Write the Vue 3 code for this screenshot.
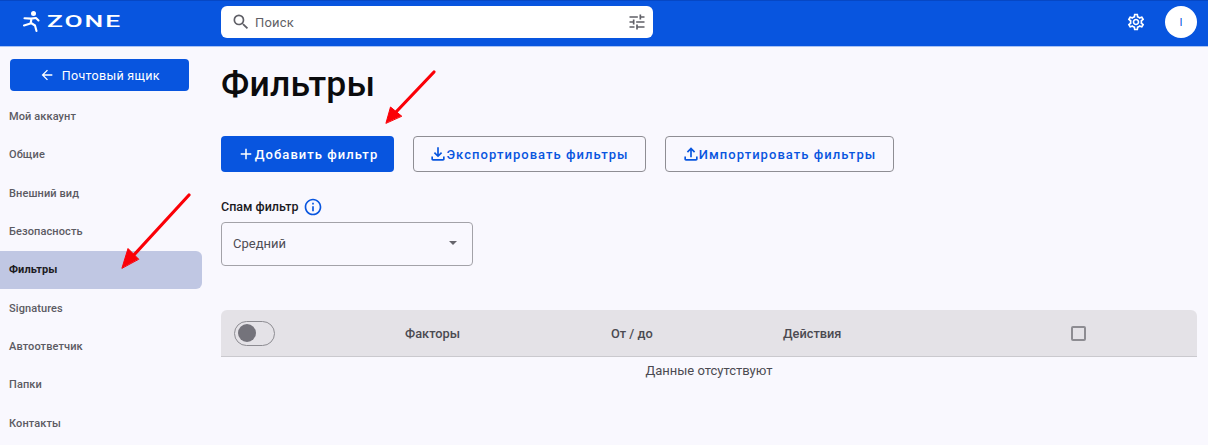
<script setup>
const items = [
  { label: 'Мой аккаунт' },
  { label: 'Общие' },
  { label: 'Внешний вид' },
  { label: 'Безопасность' },
  { label: 'Фильтры', active: true },
  { label: 'Signatures' },
  { label: 'Автоответчик' },
  { label: 'Папки' },
  { label: 'Контакты' },
]
</script>

<template>
  <div class="page">
    <header class="topbar">
      <div class="logo">
        <svg class="logo-man" width="20" height="24" viewBox="0 0 20 24">
          <circle cx="11.500" cy="3.600" r="2.500" fill="#fff" />
          <path d="M2.500 8.200 L9 8.600 L14 8 L16.500 10.500 M9.500 9 L8.500 13.500 L2 15.500 M9 13 L13 15.500 L14.500 21" fill="none" stroke="#fff" stroke-width="2.100" stroke-linecap="round" stroke-linejoin="round" />
        </svg>
        <span class="logo-text">ZONE</span>
      </div>
      <div class="search">
        <svg class="search-icon" width="20" height="20" viewBox="0 0 24 24"><path fill="#5f5f66" d="M15.500 14h-.79l-.28-.27A6.470 6.470 0 0 0 16 9.500 6.500 6.500 0 1 0 9.500 16c1.610 0 3.090-.59 4.230-1.570l.27.28v.79l5 4.990L20.490 19l-4.990-5zm-6 0C7.010 14 5 11.990 5 9.500S7.010 5 9.500 5 14 7.010 14 9.500 11.990 14 9.500 14z" /></svg>
        <span class="search-text">Поиск</span>
        <svg class="tune-icon" width="20" height="20" viewBox="0 0 24 24"><path fill="#5f5f66" d="M3 17v2h6v-2H3zM3 5v2h10V5H3zm10 16v-2h8v-2h-8v-2h-2v6h2zM7 9v2H3v2h4v2h2V9H7zm14 4v-2H11v2h10zm-6-4h2V7h4V5h-4V3h-2v6z" /></svg>
      </div>
      <svg class="gear" width="20" height="20" viewBox="0 0 24 24"><path fill="#fff" d="M19.430 12.980c.04-.32.07-.64.07-.98 0-.34-.03-.66-.07-.98l2.110-1.650c.19-.15.24-.42.12-.64l-2-3.460c-.09-.16-.26-.25-.44-.25-.06 0-.12.01-.17.03l-2.490 1c-.52-.4-1.080-.73-1.690-.98l-.38-2.650C14.460 2.180 14.250 2 14 2h-4c-.25 0-.46.180-.49.420l-.38 2.650c-.61.250-1.170.590-1.690.980l-2.490-1c-.06-.02-.12-.03-.18-.03-.17 0-.34.090-.43.250l-2 3.460c-.13.220-.07.490.12.640l2.110 1.650c-.04.320-.07.650-.07.980 0 .330.030.660.070.980l-2.110 1.650c-.19.150-.24.420-.12.640l2 3.460c.09.160.26.250.44.250.06 0 .12-.01.170-.03l2.490-1c.52.400 1.080.730 1.690.980l.38 2.650c.03.240.24.420.49.420h4c.25 0 .46-.18.490-.42l.38-2.650c.61-.25 1.170-.59 1.690-.98l2.490 1c.06.020.12.030.18.030.17 0 .34-.09.43-.25l2-3.460c.12-.22.070-.49-.12-.64l-2.110-1.650zm-1.980-1.710c.04.310.05.520.05.730 0 .210-.02.430-.05.730l-.14 1.130.89.700 1.080.840-.7 1.210-1.270-.51-1.040-.42-.9.680c-.43.320-.84.560-1.250.730l-1.060.430-.16 1.130-.2 1.350h-1.400l-.19-1.350-.16-1.130-1.060-.43c-.43-.18-.83-.41-1.230-.71l-.91-.7-1.060.43-1.270.51-.7-1.210 1.080-.84.890-.7-.14-1.130c-.03-.31-.05-.54-.05-.74s.02-.43.050-.73l.14-1.130-.89-.7-1.080-.84.7-1.210 1.270.51 1.040.42.900-.68c.43-.32.840-.56 1.250-.73l1.060-.43.160-1.130.2-1.350h1.390l.19 1.350.16 1.130 1.060.43c.43.180.83.410 1.230.71l.91.700 1.060-.43 1.270-.51.7 1.210-1.070.85-.89.7.14 1.130zM12 8c-2.210 0-4 1.790-4 4s1.790 4 4 4 4-1.790 4-4-1.790-4-4-4zm0 6c-1.100 0-2-.9-2-2s.9-2 2-2 2 .9 2 2-.9 2-2 2z" /></svg>
      <div class="avatar">I</div>
    </header>

    <div class="body">
      <aside class="sidebar">
        <button class="mailbox">
          <svg width="16" height="16" viewBox="0 0 24 24"><path fill="#fff" d="M20 11H7.830l5.590-5.590L12 4l-8 8 8 8 1.410-1.410L7.830 13H20v-2z" /></svg>
          <span>Почтовый ящик</span>
        </button>
        <nav class="menu">
          <a v-for="item in items" :key="item.label" class="menu-item" :class="{ active: item.active }">{{ item.label }}</a>
        </nav>
      </aside>

      <main class="content">
        <h1 class="title">Фильтры</h1>

        <div class="actions">
          <button class="btn primary">
            <svg width="18" height="18" viewBox="0 0 24 24"><path fill="#fff" d="M19 13h-6v6h-2v-6H5v-2h6V5h2v6h6v2z" /></svg>
            Добавить фильтр
          </button>
          <button class="btn outline export">
            <svg class="btn-icon" width="20" height="20" viewBox="0 0 24 24"><path fill="#0855df" d="M18 15v3H6v-3H4v3c0 1.100.9 2 2 2h12c1.100 0 2-.9 2-2v-3h-2zm-1-4-1.410-1.410L13 12.170V4h-2v8.170L8.410 9.590 7 11l5 5 5-5z" /></svg>
            Экспортировать фильтры
          </button>
          <button class="btn outline import">
            <svg class="btn-icon" width="20" height="20" viewBox="0 0 24 24"><path fill="#0855df" d="M18 15v3H6v-3H4v3c0 1.100.9 2 2 2h12c1.100 0 2-.9 2-2v-3h-2zM7 9l1.410 1.410L11 7.830V16h2V7.830l2.590 2.580L17 9l-5-5-5 5z" /></svg>
            Импортировать фильтры
          </button>
        </div>

        <div class="spam-label">
          <span>Спам фильтр</span>
          <svg class="info" width="20" height="20" viewBox="0 0 24 24"><path fill="#0855df" d="M11 7h2v2h-2zm0 4h2v6h-2zm1-9C6.480 2 2 6.480 2 12s4.480 10 10 10 10-4.480 10-10S17.520 2 12 2zm0 18c-4.410 0-8-3.590-8-8s3.590-8 8-8 8 3.590 8 8-3.590 8-8 8z" /></svg>
        </div>

        <div class="select">
          <span>Средний</span>
          <i class="caret"></i>
        </div>

        <div class="table-head">
          <div class="toggle"><i class="thumb"></i></div>
          <span class="col col-factors">Факторы</span>
          <span class="col col-range">От / до</span>
          <span class="col col-actions">Действия</span>
          <i class="checkbox"></i>
        </div>
        <div class="empty">Данные отсутствуют</div>
      </main>
    </div>

    <svg class="arrows" width="1208" height="445" viewBox="0 0 1208 445">
      <g fill="#fb0007" stroke="#fb0007" stroke-linecap="round">
        <path d="M434 72 L396 112" stroke-width="3.200" fill="none" />
        <path d="M386 123 L390.500 107 L401.500 116 Z" stroke-width="1" />
        <path d="M189 195 L132 257" stroke-width="3.200" fill="none" />
        <path d="M122 268 L128 248.500 L138.500 259 Z" stroke-width="1" />
      </g>
    </svg>
  </div>
</template>

<style>
html, body { margin: 0; background: #f9f8fe; }
</style>

<style scoped>
.page {
  position: relative;
  width: 1208px;
  height: 445px;
  overflow: hidden;
  background: #f9f8fe;
  font-family: Roboto, "Liberation Sans", sans-serif;
  color: #1c1b1f;
}
.topbar {
  box-sizing: border-box;
  height: 47px;
  display: flex;
  align-items: center;
  background: #0855df;
  border-top: 1px solid #0647c4;
  border-bottom: 1px solid #a9c3f4;
  padding: 0 11px 3px 22px;
}
.logo {
  width: 199px;
  display: flex;
  align-items: center;
  gap: 5px;
  flex: none;
}
.logo-text {
  display: inline-block;
  color: #fff;
  font-family: Roboto, sans-serif;
  font-size: 16.500px;
  font-weight: 500;
  line-height: 16px;
  letter-spacing: 1.200px;
  transform: scaleX(1.6);
  transform-origin: left center;
}
.search {
  box-sizing: border-box;
  width: 432px;
  height: 32px;
  flex: none;
  display: flex;
  align-items: center;
  background: #fff;
  border-radius: 6px;
  padding: 0 6px 0 10px;
}
.search-text {
  margin-left: 4px;
  flex: 1;
  font-size: 13px;
  letter-spacing: .2px;
  color: #5f5f66;
}
.gear { margin-left: auto; margin-right: 19px; }
.avatar {
  width: 32px;
  height: 32px;
  flex: none;
  border-radius: 50%;
  background: #fff;
  color: #0855df;
  display: flex;
  align-items: center;
  justify-content: center;
  font-size: 11px;
}
.body { display: flex; }
.sidebar { width: 202px; flex: none; padding-top: 12px; }
.mailbox {
  box-sizing: border-box;
  width: 179px;
  height: 32px;
  margin-left: 10px;
  display: flex;
  align-items: center;
  justify-content: center;
  gap: 6.500px;
  border: 0;
  border-radius: 4px;
  background: #0855df;
  color: #fff;
  font: 400 12.500px Roboto, sans-serif;
  letter-spacing: .3px;
}
.menu { margin-top: 6.300px; display: flex; flex-direction: column; }
.menu-item {
  box-sizing: border-box;
  height: 38.330px;
  display: flex;
  align-items: center;
  padding-left: 9px;
  font-size: 11px;
  font-weight: 500;
  color: #5c5b63;
  letter-spacing: .1px;
}
.menu-item.active {
  background: #c0c7e3;
  border-radius: 0 6px 6px 0;
  color: #1c1b1f;
  font-weight: 700;
}
.content { margin-left: 19px; width: 976px; }
.title {
  margin: 18px 0 0;
  font-size: 35.500px;
  line-height: 38px;
  font-weight: 500;
  color: #0b0b0d;
  letter-spacing: .2px;
}
.actions { display: flex; margin-top: 33px; }
.btn {
  box-sizing: border-box;
  height: 36px;
  display: flex;
  align-items: center;
  justify-content: center;
  border-radius: 4px;
  font: 500 13px Roboto, sans-serif;
  letter-spacing: 1.050px;
  white-space: nowrap;
  padding: 0;
}
.btn-icon { margin: 0 -2px 0 -2px; }
.primary { width: 173px; background: #0855df; color: #fff; border: 0; }
.outline { background: transparent; color: #0855df; border: 1px solid #8f8e94; }
.export { width: 233px; margin-left: 19px; }
.import { width: 229px; margin-left: 19px; }
.spam-label {
  display: flex;
  align-items: center;
  gap: 5px;
  margin-top: 25px;
  height: 18px;
  font-size: 12.500px;
  font-weight: 500;
  color: #1c1b1f;
}
.info { margin-top: 2px; }
.select {
  box-sizing: border-box;
  width: 252px;
  height: 44px;
  margin-top: 7px;
  display: flex;
  align-items: center;
  justify-content: space-between;
  padding: 0 15px 2px 11px;
  border: 1px solid #a3a2a8;
  border-radius: 4px;
  font-size: 13px;
  color: #4f4e55;
}
.caret {
  width: 0;
  height: 0;
  border-left: 4px solid transparent;
  border-right: 4px solid transparent;
  border-top: 4px solid #66656c;
}
.table-head {
  box-sizing: border-box;
  height: 47px;
  margin-top: 44px;
  display: grid;
  grid-template-columns: 184px 206px 172px 288px 1fr;
  align-items: center;
  background: #e4e2e7;
  border-radius: 6px 6px 0 0;
  border-bottom: 1px solid #cac9ce;
  font-size: 12.800px;
  font-weight: 500;
  color: #4b4a51;
}
.toggle {
  box-sizing: border-box;
  width: 41px;
  height: 25px;
  margin-left: 13px;
  border: 1.500px solid #8d8c92;
  border-radius: 13px;
  display: flex;
  align-items: center;
  padding-left: 2.500px;
}
.thumb { width: 18px; height: 18px; border-radius: 50%; background: #74737b; }
.checkbox {
  box-sizing: border-box;
  width: 15px;
  height: 15px;
  border: 2px solid #8d8c92;
  border-radius: 2px;
}
.empty {
  margin-top: 6px;
  text-align: center;
  font-size: 13px;
  line-height: 16px;
  color: #4b4a51;
}
.arrows { position: absolute; left: 0; top: 0; pointer-events: none; }
</style>
